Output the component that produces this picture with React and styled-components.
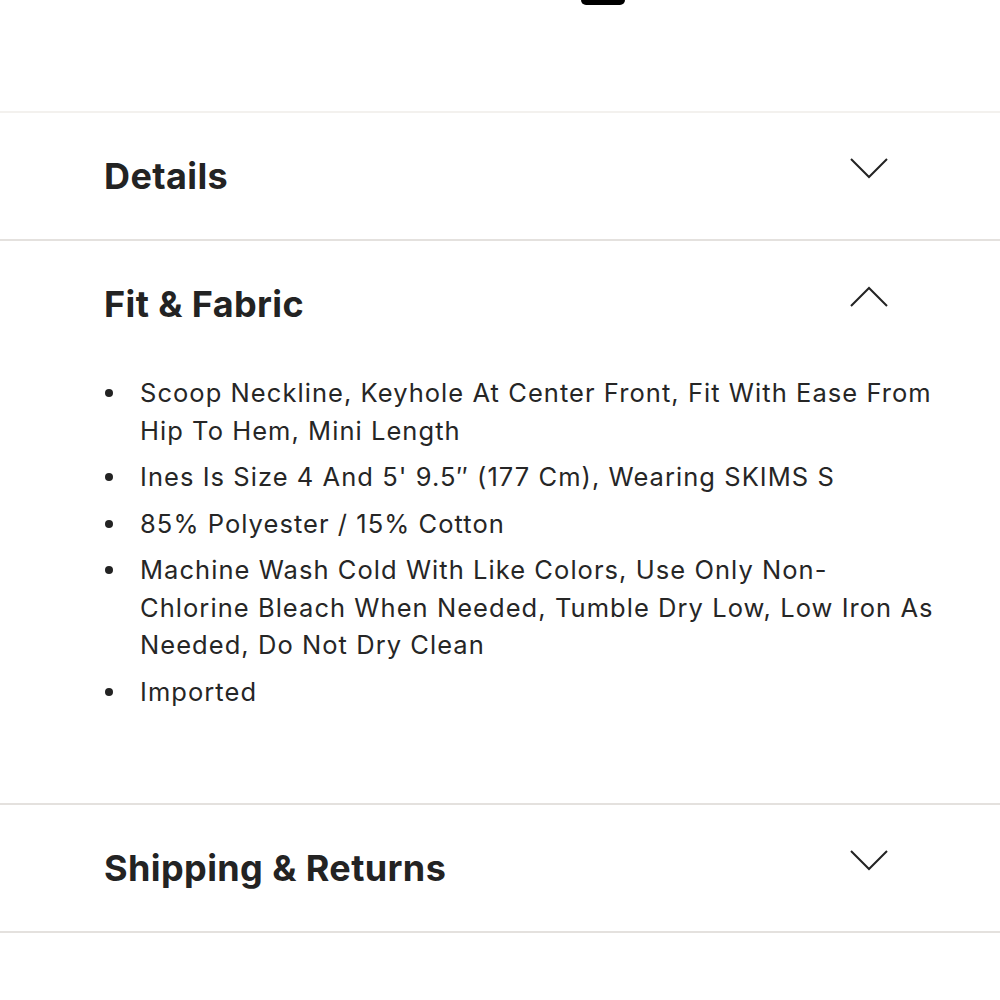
import React from "react";
import styled, { createGlobalStyle } from "styled-components";

const Global = createGlobalStyle`
  html, body {
    margin: 0;
    padding: 0;
    background: #ffffff;
  }
  body {
    font-family: Inter, "Noto Sans", sans-serif;
    color: #232323;
  }
`;

const Page = styled.div`
  width: 1000px;
  display: flex;
  flex-direction: column;
`;

const TopArea = styled.div`
  height: 111px;
  display: flex;
  align-items: flex-start;
`;

const TopButtonEdge = styled.div`
  margin-left: 581px;
  width: 44px;
  height: 5px;
  background: #000;
  border-radius: 0 0 12px 12px;
`;

const Section = styled.section`
  border-top: 2px solid ${(p) => (p.$faint ? "#f3f1ee" : "#e4e1de")};
  display: flex;
  flex-direction: column;
`;

const Header = styled.div`
  height: 126px;
  display: flex;
  align-items: center;
  justify-content: space-between;
  padding: 0 112px 0 104px;
`;

const Title = styled.h2`
  margin: 0;
  font-size: 36px;
  font-weight: 700;
  letter-spacing: 0.4px;
  color: #232323;
`;

const Chevron = styled.svg`
  width: 38px;
  height: 21px;
  margin-bottom: 15px;
`;

const List = styled.ul`
  margin: 7px 0 0;
  padding: 0 40px 93px 140px;
  list-style: none;
  display: flex;
  flex-direction: column;
  gap: 9px;
`;

const Item = styled.li`
  position: relative;
  font-size: 25.5px;
  line-height: 37.5px;
  letter-spacing: 1.05px;
  color: #262626;

  &::before {
    content: "";
    position: absolute;
    left: -35px;
    top: 15px;
    width: 8px;
    height: 8px;
    border-radius: 50%;
    background: #232323;
  }
`;

const Bottom = styled.div`
  border-top: 2px solid #e4e1de;
  height: 66px;
`;

function Arrow({ up }) {
  return (
    <Chevron viewBox="0 0 38 21" fill="none">
      <polyline
        points={up ? "1,20 19,2 37,20" : "1,1 19,19 37,1"}
        stroke="#232323"
        strokeWidth="2"
      />
    </Chevron>
  );
}

export default function App() {
  return (
    <Page>
      <Global />
      <TopArea>
        <TopButtonEdge />
      </TopArea>
      <Section $faint>
        <Header>
          <Title>Details</Title>
          <Arrow />
        </Header>
      </Section>
      <Section>
        <Header>
          <Title>Fit &amp; Fabric</Title>
          <Arrow up />
        </Header>
        <List>
          <Item>Scoop Neckline, Keyhole At Center Front, Fit With Ease From Hip To Hem, Mini Length</Item>
          <Item>Ines Is Size 4 And 5' 9.5{"\u2033"} (177 Cm), Wearing SKIMS S</Item>
          <Item>85% Polyester / 15% Cotton</Item>
          <Item>
            Machine Wash Cold With Like Colors, Use Only Non-
            <br />
            Chlorine Bleach When Needed, Tumble Dry Low, Low Iron As Needed, Do Not Dry Clean
          </Item>
          <Item>Imported</Item>
        </List>
      </Section>
      <Section>
        <Header>
          <Title>Shipping &amp; Returns</Title>
          <Arrow />
        </Header>
      </Section>
      <Bottom />
    </Page>
  );
}
